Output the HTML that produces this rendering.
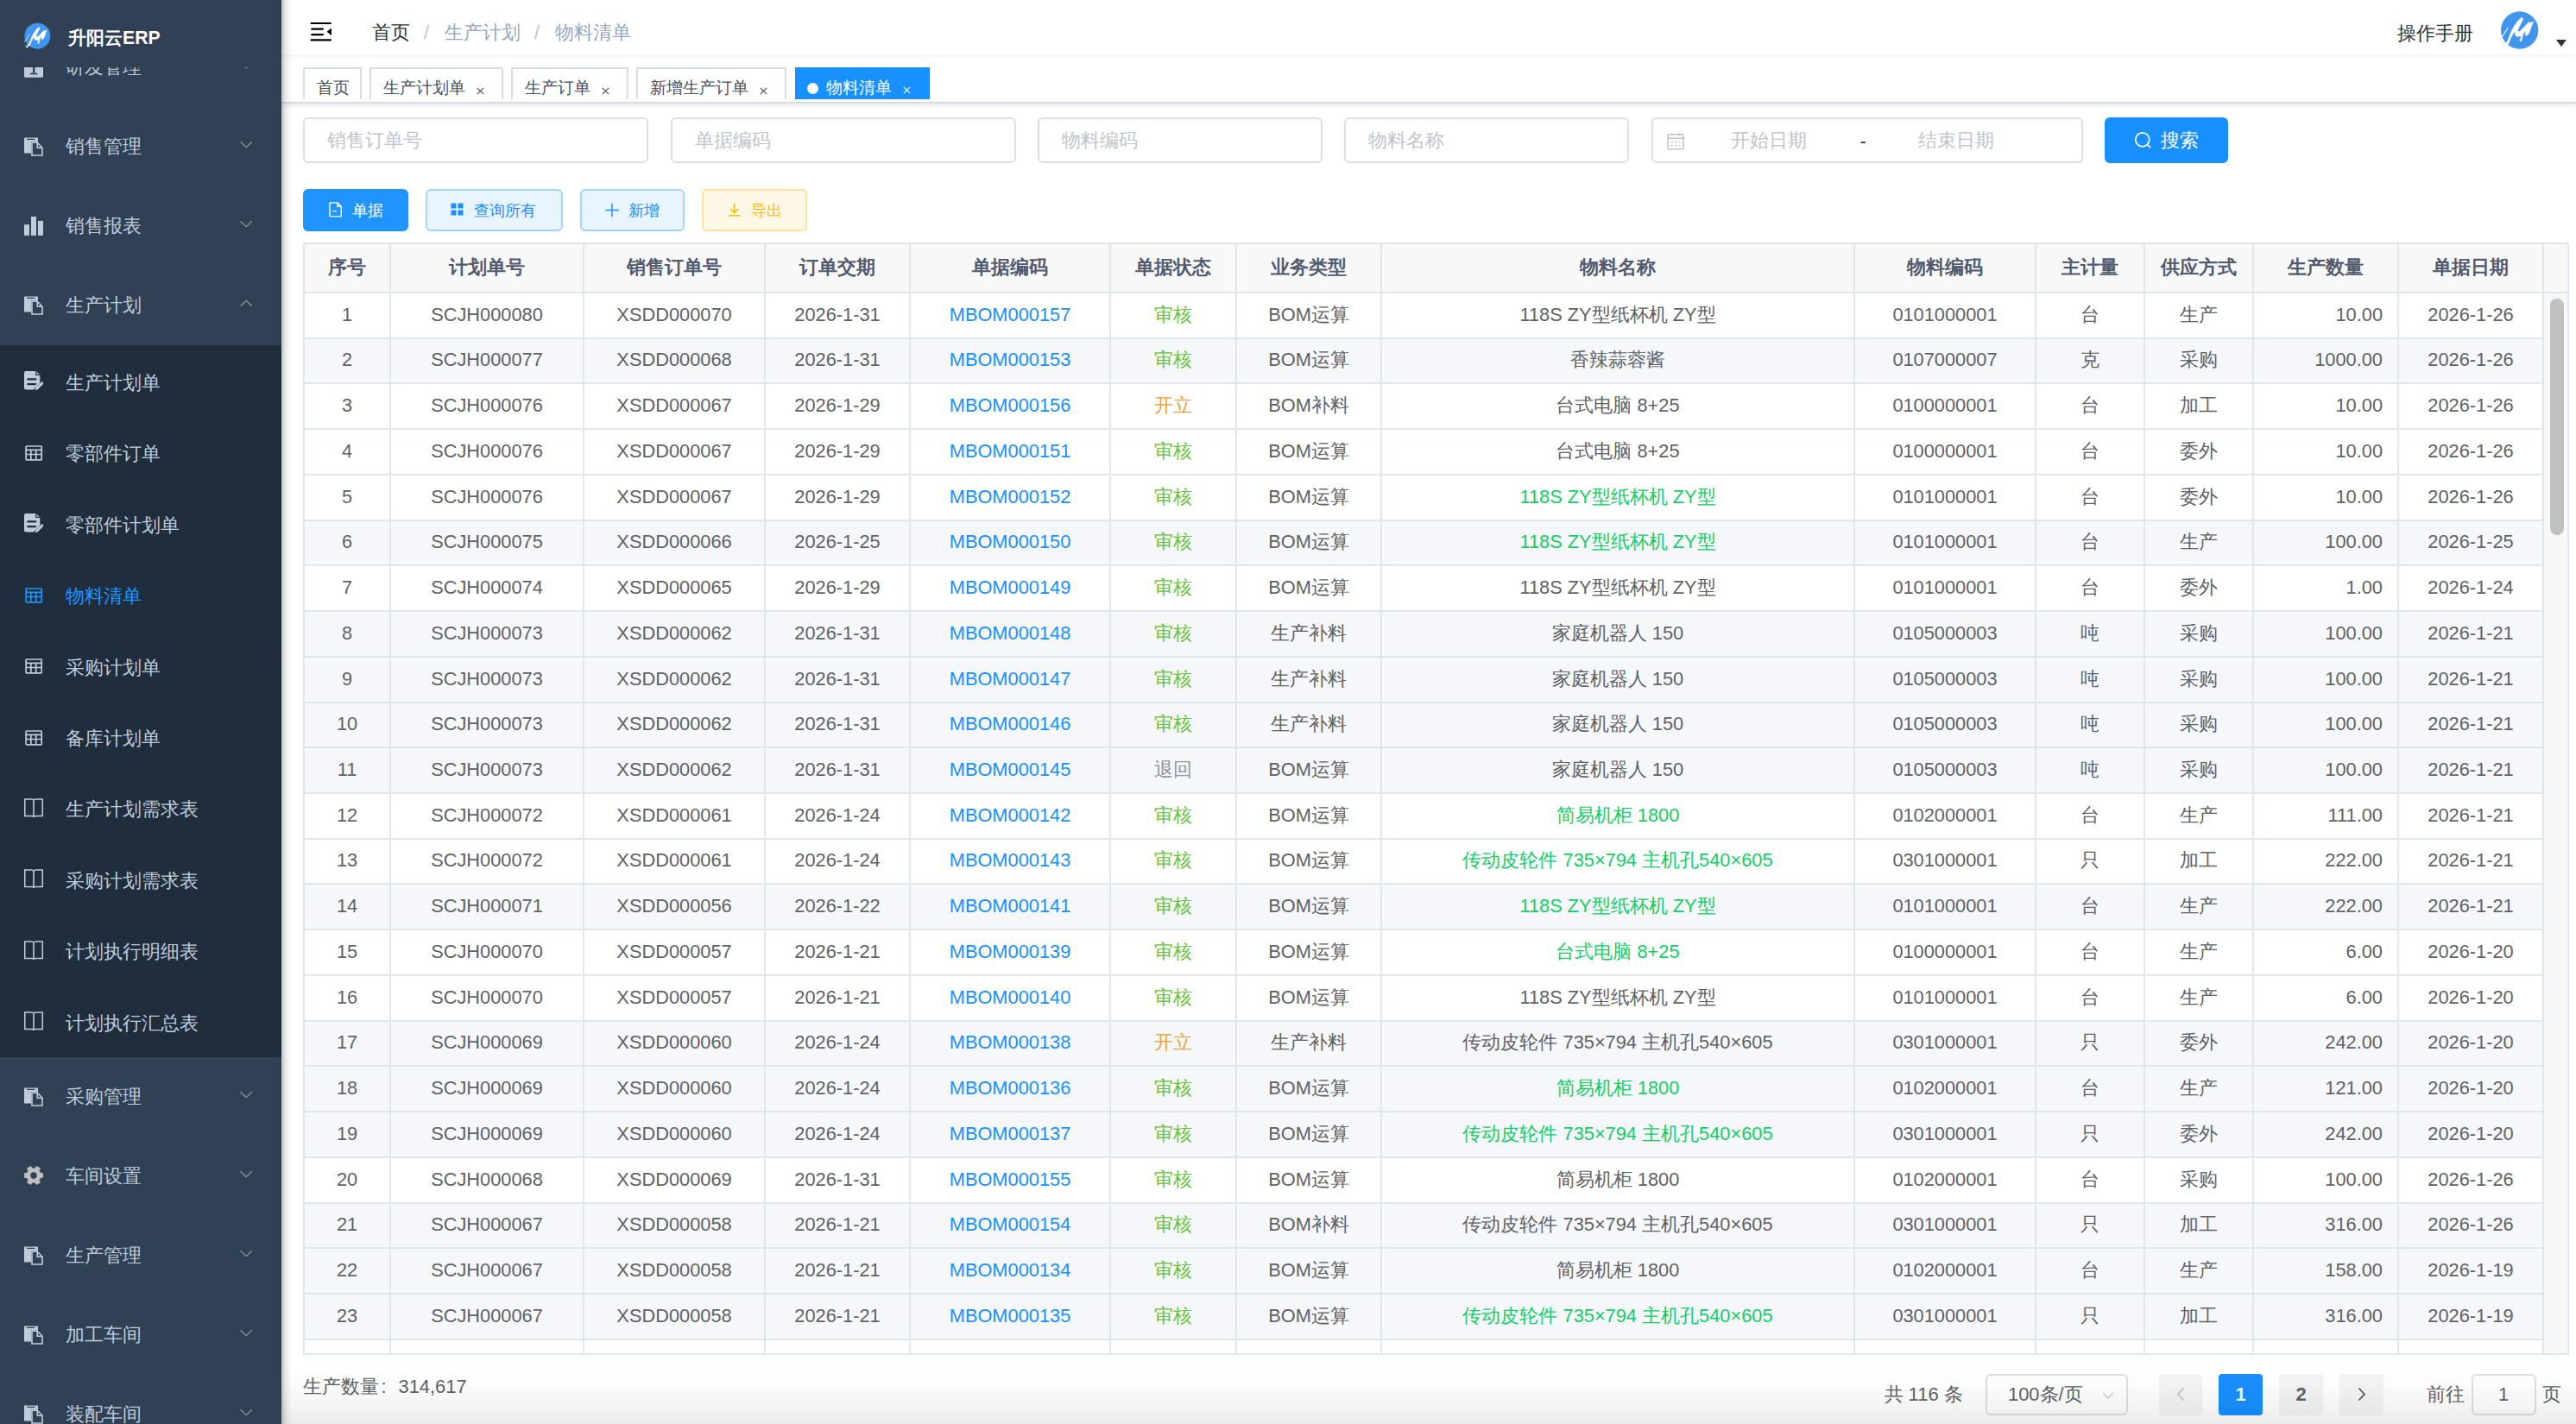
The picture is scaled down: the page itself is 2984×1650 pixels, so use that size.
<!DOCTYPE html>
<html><head><meta charset="utf-8"><title>物料清单</title>
<style>
*{box-sizing:border-box;margin:0;padding:0}
html,body{width:2984px;height:1650px;overflow:hidden;background:#fff;font-family:"Liberation Sans",sans-serif;}
.abs{position:absolute}
#sidebar{position:absolute;left:0;top:0;width:326px;height:1650px;background:#304156;overflow:hidden;z-index:3}
.micon{position:absolute;left:28px;width:22px;height:24px}
.micon svg{display:block}
.mtext{position:absolute;left:76px;height:40px;line-height:40px;font-size:21.9px;color:#bfcbd9;white-space:nowrap}
.mtext.active{color:#1e96ff}
.marrow{position:absolute;left:277px}
#logo{position:absolute;left:0;top:0;width:326px;height:77.5px;background:#304156;z-index:2}
#main-shadow{position:absolute;left:326px;top:0;width:20px;height:1650px;background:linear-gradient(to right,rgba(0,21,41,.28),rgba(0,21,41,.10) 4px,rgba(0,21,41,0) 12px);z-index:2}
.hl{position:absolute;left:351px;width:2625px;height:2px;background:#dfe6ec}
.vl{position:absolute;top:281px;width:2px;height:1289px;background:#dfe6ec}
.rowbg{position:absolute;left:353px;width:2592px}
.th{position:absolute;top:282px;height:55px;line-height:55px;text-align:center;font-size:21.6px;font-weight:bold;color:#515a6e;white-space:nowrap}
.td{position:absolute;text-align:center;font-size:21.8px;color:#606266;white-space:nowrap}
.td.num{text-align:right;padding-right:17px}
.link{color:#1890ff}
.st-ok{color:#67c23a} .st-open{color:#e6a23c} .st-back{color:#909399}
.green{color:#13ce66}
.inp{position:absolute;top:136px;height:53px;border:2px solid #dcdfe6;border-radius:6px;background:#fff}
.ph{position:absolute;top:0;height:49px;line-height:49px;font-size:21.9px;color:#c0c4cc;white-space:nowrap}
.btn{position:absolute;top:219px;height:49px;border-radius:6px;font-size:18.3px;white-space:nowrap}
.btn .t{position:absolute;top:0;line-height:49px;height:49px}
.tab{position:absolute;top:78px;height:37px;border:2px solid #d8dce5;border-bottom:none;background:#fff;font-size:18.5px;color:#495060;white-space:nowrap;overflow:hidden}
.tab .t{position:absolute;top:7px;line-height:30px}
.tab .x{position:absolute;top:20.5px;width:9px;height:9px}
.pg{position:absolute;top:1591.5px;height:48.5px;width:51px;border-radius:4px;background:#f4f4f5;}
</style></head><body>
<div id="sidebar">
<div class="micon" style="top:67.00px"><svg width="22" height="24" viewBox="0 0 22 24"><path d="M0 8h22v13.4q0 1.3-1.3 1.3H1.3Q0 22.7 0 21.4z" fill="#bfcbd9"/><rect x="10" y="8" width="2.4" height="9.6" fill="#304156"/><rect x="7" y="17.6" width="8.4" height="1.7" fill="#304156"/></svg></div><div class="mtext" style="top:58.20px">研发管理</div><svg class="marrow" style="top:71.00px" width="16" height="9" viewBox="0 0 16 9"><path d="M1.6 1.2l6.6 6.4 6.6-6.4" fill="none" stroke="#909399" stroke-width="1.3"/></svg>
<div class="micon" style="top:159.00px"><svg width="22" height="22" viewBox="0 0 22 22"><path d="M0 .5h16v5H8v13H0z" fill="#bfcbd9"/><rect x="3" y="1.7" width="9.6" height="1.3" rx=".6" fill="#304156"/><path d="M9 6.3h6.3l5.7 5.9V21H9z" fill="none" stroke="#bfcbd9" stroke-width="1.6"/><path d="M15.3 6.3v5.9h5.7" fill="none" stroke="#bfcbd9" stroke-width="1.6"/></svg></div><div class="mtext" style="top:150.20px">销售管理</div><svg class="marrow" style="top:163.00px" width="16" height="9" viewBox="0 0 16 9"><path d="M1.6 1.2l6.6 6.4 6.6-6.4" fill="none" stroke="#909399" stroke-width="1.3"/></svg>
<div class="micon" style="top:251.00px"><svg width="22" height="22" viewBox="0 0 22 22"><rect x="0" y="9.2" width="6" height="12.7" fill="#bfcbd9"/><rect x="8" y="0" width="6" height="21.9" fill="#bfcbd9"/><rect x="16" y="4.9" width="6" height="17" fill="#bfcbd9"/></svg></div><div class="mtext" style="top:242.20px">销售报表</div><svg class="marrow" style="top:255.00px" width="16" height="9" viewBox="0 0 16 9"><path d="M1.6 1.2l6.6 6.4 6.6-6.4" fill="none" stroke="#909399" stroke-width="1.3"/></svg>
<div class="micon" style="top:343.00px"><svg width="22" height="22" viewBox="0 0 22 22"><path d="M0 .5h16v5H8v13H0z" fill="#bfcbd9"/><rect x="3" y="1.7" width="9.6" height="1.3" rx=".6" fill="#304156"/><path d="M9 6.3h6.3l5.7 5.9V21H9z" fill="none" stroke="#bfcbd9" stroke-width="1.6"/><path d="M15.3 6.3v5.9h5.7" fill="none" stroke="#bfcbd9" stroke-width="1.6"/></svg></div><div class="mtext" style="top:334.20px">生产计划</div><svg class="marrow" style="top:347.00px" width="16" height="9" viewBox="0 0 16 9"><path d="M1.6 7.8l6.6-6.4 6.6 6.4" fill="none" stroke="#909399" stroke-width="1.3"/></svg>
<div style="position:absolute;left:0;top:400.00px;width:326px;height:824.60px;background:#1f2d3d"></div>
<div class="micon" style="top:428.83px"><svg width="22" height="24" viewBox="0 0 22 24"><path d="M2 1h11.8l4.5 4.4V15l-7.4 7.4H2q-2 0-2-2V3q0-2 2-2z" fill="#bfcbd9"/><path d="M13.8 1v4.4h4.5" fill="none" stroke="#1f2d3d" stroke-width="1.2"/><rect x="3.2" y="9.3" width="11.3" height="2.2" rx="1.1" fill="#1f2d3d"/><rect x="3.2" y="15" width="11" height="2.2" rx="1.1" fill="#1f2d3d"/><path d="M12.6 23.3l1-3.2 7.2-7.2 2.2 2.2-7.2 7.2z" fill="#bfcbd9"/></svg></div>
<div class="mtext" style="top:423.73px">生产计划单</div>
<div class="micon" style="top:516.04px"><svg width="22" height="22" viewBox="0 0 22 22"><rect x="2.1" y="1" width="18.1" height="15.8" rx=".7" fill="none" stroke="#bfcbd9" stroke-width="1.7"/><path d="M2.1 5.3h18.1M2.1 10.5h18.1M7.8 5.3v11.5M13.7 5.3v11.5" stroke="#bfcbd9" stroke-width="1.7"/></svg></div>
<div class="mtext" style="top:506.19px">零部件订单</div>
<div class="micon" style="top:593.75px"><svg width="22" height="24" viewBox="0 0 22 24"><path d="M2 1h11.8l4.5 4.4V15l-7.4 7.4H2q-2 0-2-2V3q0-2 2-2z" fill="#bfcbd9"/><path d="M13.8 1v4.4h4.5" fill="none" stroke="#1f2d3d" stroke-width="1.2"/><rect x="3.2" y="9.3" width="11.3" height="2.2" rx="1.1" fill="#1f2d3d"/><rect x="3.2" y="15" width="11" height="2.2" rx="1.1" fill="#1f2d3d"/><path d="M12.6 23.3l1-3.2 7.2-7.2 2.2 2.2-7.2 7.2z" fill="#bfcbd9"/></svg></div>
<div class="mtext" style="top:588.65px">零部件计划单</div>
<div class="micon" style="top:680.96px"><svg width="22" height="22" viewBox="0 0 22 22"><rect x="2.1" y="1" width="18.1" height="15.8" rx=".7" fill="none" stroke="#1e96ff" stroke-width="1.7"/><path d="M2.1 5.3h18.1M2.1 10.5h18.1M7.8 5.3v11.5M13.7 5.3v11.5" stroke="#1e96ff" stroke-width="1.7"/></svg></div>
<div class="mtext active" style="top:671.11px">物料清单</div>
<div class="micon" style="top:763.42px"><svg width="22" height="22" viewBox="0 0 22 22"><rect x="2.1" y="1" width="18.1" height="15.8" rx=".7" fill="none" stroke="#bfcbd9" stroke-width="1.7"/><path d="M2.1 5.3h18.1M2.1 10.5h18.1M7.8 5.3v11.5M13.7 5.3v11.5" stroke="#bfcbd9" stroke-width="1.7"/></svg></div>
<div class="mtext" style="top:753.57px">采购计划单</div>
<div class="micon" style="top:845.88px"><svg width="22" height="22" viewBox="0 0 22 22"><rect x="2.1" y="1" width="18.1" height="15.8" rx=".7" fill="none" stroke="#bfcbd9" stroke-width="1.7"/><path d="M2.1 5.3h18.1M2.1 10.5h18.1M7.8 5.3v11.5M13.7 5.3v11.5" stroke="#bfcbd9" stroke-width="1.7"/></svg></div>
<div class="mtext" style="top:836.03px">备库计划单</div>
<div class="micon" style="top:924.99px"><svg width="22" height="22" viewBox="0 0 22 22"><path d="M.75.9h7.8c1.3 0 2 .5 2.45 1.5.45-1 1.15-1.5 2.45-1.5h7.8v19.5h-7.8c-1.3 0-2 .3-2.45 1.1-.45-.8-1.15-1.1-2.45-1.1H.75z" fill="none" stroke="#bfcbd9" stroke-width="1.5"/><path d="M11 2.4v18.4" stroke="#a9b4c2" stroke-width="1.9"/></svg></div>
<div class="mtext" style="top:918.49px">生产计划需求表</div>
<div class="micon" style="top:1007.45px"><svg width="22" height="22" viewBox="0 0 22 22"><path d="M.75.9h7.8c1.3 0 2 .5 2.45 1.5.45-1 1.15-1.5 2.45-1.5h7.8v19.5h-7.8c-1.3 0-2 .3-2.45 1.1-.45-.8-1.15-1.1-2.45-1.1H.75z" fill="none" stroke="#bfcbd9" stroke-width="1.5"/><path d="M11 2.4v18.4" stroke="#a9b4c2" stroke-width="1.9"/></svg></div>
<div class="mtext" style="top:1000.95px">采购计划需求表</div>
<div class="micon" style="top:1089.91px"><svg width="22" height="22" viewBox="0 0 22 22"><path d="M.75.9h7.8c1.3 0 2 .5 2.45 1.5.45-1 1.15-1.5 2.45-1.5h7.8v19.5h-7.8c-1.3 0-2 .3-2.45 1.1-.45-.8-1.15-1.1-2.45-1.1H.75z" fill="none" stroke="#bfcbd9" stroke-width="1.5"/><path d="M11 2.4v18.4" stroke="#a9b4c2" stroke-width="1.9"/></svg></div>
<div class="mtext" style="top:1083.41px">计划执行明细表</div>
<div class="micon" style="top:1172.37px"><svg width="22" height="22" viewBox="0 0 22 22"><path d="M.75.9h7.8c1.3 0 2 .5 2.45 1.5.45-1 1.15-1.5 2.45-1.5h7.8v19.5h-7.8c-1.3 0-2 .3-2.45 1.1-.45-.8-1.15-1.1-2.45-1.1H.75z" fill="none" stroke="#bfcbd9" stroke-width="1.5"/><path d="M11 2.4v18.4" stroke="#a9b4c2" stroke-width="1.9"/></svg></div>
<div class="mtext" style="top:1165.87px">计划执行汇总表</div>
<div class="micon" style="top:1259.60px"><svg width="22" height="22" viewBox="0 0 22 22"><path d="M0 .5h16v5H8v13H0z" fill="#bfcbd9"/><rect x="3" y="1.7" width="9.6" height="1.3" rx=".6" fill="#304156"/><path d="M9 6.3h6.3l5.7 5.9V21H9z" fill="none" stroke="#bfcbd9" stroke-width="1.6"/><path d="M15.3 6.3v5.9h5.7" fill="none" stroke="#bfcbd9" stroke-width="1.6"/></svg></div><div class="mtext" style="top:1250.80px">采购管理</div><svg class="marrow" style="top:1263.60px" width="16" height="9" viewBox="0 0 16 9"><path d="M1.6 1.2l6.6 6.4 6.6-6.4" fill="none" stroke="#909399" stroke-width="1.3"/></svg>
<div class="micon" style="top:1351.00px"><svg width="22" height="22" viewBox="0 0 22 22"><path fill="#c0c0c0" fill-rule="evenodd" stroke="#c0c0c0" stroke-width=".8" stroke-linejoin="round" d="M18.75 8.33 L21.86 8.69 L21.86 13.31 L18.75 13.67 L17.19 16.38 L18.43 19.25 L14.43 21.56 L12.56 19.05 L9.44 19.05 L7.57 21.56 L3.57 19.25 L4.81 16.38 L3.25 13.67 L0.14 13.31 L0.14 8.69 L3.25 8.33 L4.81 5.62 L3.57 2.75 L7.57 0.44 L9.44 2.95 L12.56 2.95 L14.43 0.44 L18.43 2.75 L17.19 5.62Z M11 6.8a4.2 4.2 0 1 0 0 8.4a4.2 4.2 0 1 0 0-8.4z"/></svg></div><div class="mtext" style="top:1342.80px">车间设置</div><svg class="marrow" style="top:1355.60px" width="16" height="9" viewBox="0 0 16 9"><path d="M1.6 1.2l6.6 6.4 6.6-6.4" fill="none" stroke="#909399" stroke-width="1.3"/></svg>
<div class="micon" style="top:1443.60px"><svg width="22" height="22" viewBox="0 0 22 22"><path d="M0 .5h16v5H8v13H0z" fill="#bfcbd9"/><rect x="3" y="1.7" width="9.6" height="1.3" rx=".6" fill="#304156"/><path d="M9 6.3h6.3l5.7 5.9V21H9z" fill="none" stroke="#bfcbd9" stroke-width="1.6"/><path d="M15.3 6.3v5.9h5.7" fill="none" stroke="#bfcbd9" stroke-width="1.6"/></svg></div><div class="mtext" style="top:1434.80px">生产管理</div><svg class="marrow" style="top:1447.60px" width="16" height="9" viewBox="0 0 16 9"><path d="M1.6 1.2l6.6 6.4 6.6-6.4" fill="none" stroke="#909399" stroke-width="1.3"/></svg>
<div class="micon" style="top:1535.60px"><svg width="22" height="22" viewBox="0 0 22 22"><path d="M0 .5h16v5H8v13H0z" fill="#bfcbd9"/><rect x="3" y="1.7" width="9.6" height="1.3" rx=".6" fill="#304156"/><path d="M9 6.3h6.3l5.7 5.9V21H9z" fill="none" stroke="#bfcbd9" stroke-width="1.6"/><path d="M15.3 6.3v5.9h5.7" fill="none" stroke="#bfcbd9" stroke-width="1.6"/></svg></div><div class="mtext" style="top:1526.80px">加工车间</div><svg class="marrow" style="top:1539.60px" width="16" height="9" viewBox="0 0 16 9"><path d="M1.6 1.2l6.6 6.4 6.6-6.4" fill="none" stroke="#909399" stroke-width="1.3"/></svg>
<div class="micon" style="top:1627.60px"><svg width="22" height="22" viewBox="0 0 22 22"><path d="M0 .5h16v5H8v13H0z" fill="#bfcbd9"/><rect x="3" y="1.7" width="9.6" height="1.3" rx=".6" fill="#304156"/><path d="M9 6.3h6.3l5.7 5.9V21H9z" fill="none" stroke="#bfcbd9" stroke-width="1.6"/><path d="M15.3 6.3v5.9h5.7" fill="none" stroke="#bfcbd9" stroke-width="1.6"/></svg></div><div class="mtext" style="top:1618.80px">装配车间</div><svg class="marrow" style="top:1631.60px" width="16" height="9" viewBox="0 0 16 9"><path d="M1.6 1.2l6.6 6.4 6.6-6.4" fill="none" stroke="#909399" stroke-width="1.3"/></svg>
<div id="logo">
 <div class="abs" style="left:25.4px;top:23.3px;width:38.7px;height:38.7px"><svg viewBox="0 0 56 56" width="38.7" height="38.7"><circle cx="26.65" cy="27" r="21.7" fill="#4096ee"/><path fill="#fff" stroke="#fff" stroke-width=".6" stroke-linejoin="round" d="M7.1 46.8 L13 39 L16.5 30 L20.4 22 L25.2 15.7 L28.7 12.5 L30.6 13.2 L30.3 15 L27.5 20.4 L24.4 26.7 L24.6 28.3 L26.5 28.6 L33.4 22 L37.4 17.3 L38.3 18.7 L39.8 18.2 L42.5 16.9 L37.7 29.9 L35.5 33 L34 33.4 L32.8 27.2 L30 34.3 L28.7 39.7 L27.3 39.8 L27.2 37.5 L29.2 34 L23 34.2 L21.3 32 L21.4 27.2 L16.6 35.6 L14 42.6 L9.8 45.5Z"/><path d="M4.6 37.6L13.4 23.8" stroke="#fff" stroke-width="1.3" opacity=".75"/><path d="M6 44.5l3.5-4.5M7.5 47.5l4-3.5" stroke="#cfe3fb" stroke-width="1" opacity=".8"/></svg></div>
 <div class="abs" style="left:79px;top:24px;height:40px;line-height:40px;font-size:21.2px;font-weight:bold;color:#fff;white-space:nowrap">升阳云ERP</div>
</div>
</div>
<div id="main-shadow"></div>

<!-- header -->
<div class="abs" style="left:326px;top:0;width:2658px;height:62.5px;background:#fff;box-shadow:0 1px 7px rgba(0,21,41,.07);z-index:1"></div>
<svg class="abs" style="left:358px;top:24px;z-index:1" width="28" height="26" viewBox="0 0 28 26"><rect x="1.5" y="1.9" width="24.6" height="2.2" rx="1.1" fill="#000"/><rect x="2.1" y="8.4" width="15" height="2.3" rx="1.1" fill="#000"/><rect x="2.1" y="15" width="15" height="2.2" rx="1.1" fill="#000"/><rect x="1.5" y="21.3" width="24.6" height="2.3" rx="1.1" fill="#000"/><path d="M26 8.5V16.9L20.6 12.7Z" fill="#000"/></svg>
<div class="abs" style="left:430.5px;top:18px;line-height:40px;font-size:21.9px;color:#303133;z-index:1;white-space:nowrap">首页</div>
<div class="abs" style="left:491px;top:18px;line-height:40px;font-size:21.9px;color:#c0c4cc;z-index:1">/</div>
<div class="abs" style="left:514.5px;top:18px;line-height:40px;font-size:21.9px;color:#97a8be;z-index:1;white-space:nowrap">生产计划</div>
<div class="abs" style="left:619px;top:18px;line-height:40px;font-size:21.9px;color:#c0c4cc;z-index:1">/</div>
<div class="abs" style="left:643px;top:18px;line-height:40px;font-size:21.9px;color:#97a8be;z-index:1;white-space:nowrap">物料清单</div>
<div class="abs" style="left:2776.5px;top:19px;line-height:40px;font-size:21.9px;color:#303133;z-index:1;white-space:nowrap">操作手册</div>
<div class="abs" style="left:2892px;top:8px;width:56px;height:56px;z-index:1"><svg viewBox="0 0 56 56" width="56" height="56"><circle cx="26.65" cy="27" r="21.7" fill="#4195ec"/><path fill="#fff" stroke="#fff" stroke-width=".6" stroke-linejoin="round" d="M7.1 46.8 L13 39 L16.5 30 L20.4 22 L25.2 15.7 L28.7 12.5 L30.6 13.2 L30.3 15 L27.5 20.4 L24.4 26.7 L24.6 28.3 L26.5 28.6 L33.4 22 L37.4 17.3 L38.3 18.7 L39.8 18.2 L42.5 16.9 L37.7 29.9 L35.5 33 L34 33.4 L32.8 27.2 L30 34.3 L28.7 39.7 L27.3 39.8 L27.2 37.5 L29.2 34 L23 34.2 L21.3 32 L21.4 27.2 L16.6 35.6 L14 42.6 L9.8 45.5Z"/><path d="M4.6 37.6L13.4 23.8" stroke="#fff" stroke-width="1.3" opacity=".75"/><path d="M6 44.5l3.5-4.5M7.5 47.5l4-3.5" stroke="#cfe3fb" stroke-width="1" opacity=".8"/></svg></div>
<svg class="abs" style="left:2960px;top:45px;z-index:1" width="14" height="10" viewBox="0 0 14 10"><path d="M1 1h12l-6 8z" fill="#303133"/></svg>

<!-- tags view -->
<div class="abs" style="left:326px;top:62.5px;width:2658px;height:57.5px;background:#fff;border-bottom:2px solid #d8dce5;box-shadow:0 2px 6px rgba(0,0,0,.10)"></div>
<div class="tab" style="left:351px;width:68px"><span class="t" style="left:14px">首页</span></div>
<div class="tab" style="left:428px;width:155px"><span class="t" style="left:14px">生产计划单</span><span class="x" style="left:122px"><svg width="9" height="9" viewBox="0 0 9 9" style="display:block"><path d="M.8.8l7.4 7.4M8.2.8L.8 8.2" stroke="currentColor" stroke-width="1.2"/></svg></span></div>
<div class="tab" style="left:592px;width:136px"><span class="t" style="left:14px">生产订单</span><span class="x" style="left:103px"><svg width="9" height="9" viewBox="0 0 9 9" style="display:block"><path d="M.8.8l7.4 7.4M8.2.8L.8 8.2" stroke="currentColor" stroke-width="1.2"/></svg></span></div>
<div class="tab" style="left:737px;width:174px"><span class="t" style="left:14px">新增生产订单</span><span class="x" style="left:141px"><svg width="9" height="9" viewBox="0 0 9 9" style="display:block"><path d="M.8.8l7.4 7.4M8.2.8L.8 8.2" stroke="currentColor" stroke-width="1.2"/></svg></span></div>
<div class="tab" style="left:921px;width:156px;background:#1890ff;border-color:#1890ff;color:#fff"><span class="abs" style="left:11.5px;top:15.5px;width:13.2px;height:13.2px;border-radius:50%;background:#fff"></span><span class="t" style="left:34px">物料清单</span><span class="x" style="left:122.5px;top:19.5px"><svg width="9" height="9" viewBox="0 0 9 9" style="display:block"><path d="M.8.8l7.4 7.4M8.2.8L.8 8.2" stroke="currentColor" stroke-width="1.2"/></svg></span></div>

<!-- search inputs -->
<div class="inp" style="left:351px;width:400px"><span class="ph" style="left:26px">销售订单号</span></div>
<div class="inp" style="left:777px;width:400px"><span class="ph" style="left:26px">单据编码</span></div>
<div class="inp" style="left:1202px;width:330px"><span class="ph" style="left:26px">物料编码</span></div>
<div class="inp" style="left:1557px;width:330px"><span class="ph" style="left:26px">物料名称</span></div>
<div class="inp" style="left:1913px;width:500px">
 <svg class="abs" style="left:14.7px;top:15px" width="22" height="22" viewBox="0 0 22 22"><rect x="2" y="2.8" width="18" height="17" rx="1" fill="none" stroke="#c0c4cc" stroke-width="1.5"/><path d="M2 7.3h18M6.5 1v3.5M15.5 1v3.5" stroke="#c0c4cc" stroke-width="1.5"/><path d="M5.5 11.6h2.2M9.9 11.6h2.2M14.3 11.6h2.2M5.5 15.6h2.2M9.9 15.6h2.2M14.3 15.6h2.2" stroke="#c0c4cc" stroke-width="1.3"/></svg>
 <span class="ph" style="left:90px">开始日期</span>
 <span class="ph" style="left:239.5px;top:1px;color:#303133">-</span>
 <span class="ph" style="left:307px">结束日期</span>
</div>
<div class="btn" style="left:2438px;top:136px;width:143px;height:53px;background:#1890ff;color:#fff;font-size:21.9px">
 <svg class="abs" style="left:33.5px;top:16px" width="22" height="22" viewBox="0 0 22 22"><circle cx="9.8" cy="9.8" r="8" fill="none" stroke="#fff" stroke-width="1.7"/><path d="M15.5 15.5l3.6 3.6" stroke="#fff" stroke-width="1.7"/></svg>
 <span class="t" style="left:65px;line-height:53px;height:53px">搜索</span>
</div>

<!-- action buttons -->
<div class="btn" style="left:351px;width:122px;background:#2094fe;color:#fff">
 <svg class="abs" style="left:29.6px;top:15.2px" width="16" height="18" viewBox="0 0 16 18"><path d="M1 .9h9l4.3 4.3V16.6H1z M10 .9v4.3h4.3" fill="none" stroke="#fff" stroke-width="1.4"/><path d="M4.3 10.6h4.6" stroke="#fff" stroke-width="1.4"/></svg>
 <span class="t" style="left:57px">单据</span>
</div>
<div class="btn" style="left:493px;width:159px;background:#e8f4ff;border:2px solid #a3d3ff;color:#1890ff">
 <svg class="abs" style="left:27px;top:14px" width="16" height="16" viewBox="0 0 16 16"><rect x="0.5" y="0.5" width="6" height="6" fill="#1890ff"/><rect x="8.5" y="0.5" width="6" height="6" fill="#1890ff"/><rect x="0.5" y="8.5" width="6" height="6" fill="#1890ff"/><rect x="8.5" y="8.5" width="6" height="6" fill="#1890ff"/></svg>
 <span class="t" style="left:53.5px;line-height:45px">查询所有</span>
</div>
<div class="btn" style="left:672px;width:121px;background:#e8f4ff;border:2px solid #a3d3ff;color:#1890ff">
 <svg class="abs" style="left:27px;top:13.5px" width="17" height="17" viewBox="0 0 17 17"><path d="M8 .8v15.4M.6 8.4h15.4" stroke="#1890ff" stroke-width="1.5"/></svg>
 <span class="t" style="left:54px;line-height:45px">新增</span>
</div>
<div class="btn" style="left:813px;width:122px;background:#fff8e6;border:2px solid #ffe399;color:#ffba00">
 <svg class="abs" style="left:28px;top:13.5px" width="16" height="17" viewBox="0 0 16 17"><path d="M7.6 1v10.5M3 7l4.6 4.6L12.2 7M.9 14.7h13.6" fill="none" stroke="#ffba00" stroke-width="1.4"/></svg>
 <span class="t" style="left:54.5px;line-height:45px">导出</span>
</div>

<!-- table -->
<div class="rowbg" style="top:340px;height:51px;background:#ffffff"></div>
<div class="rowbg" style="top:393px;height:50px;background:#f5f7fa"></div>
<div class="rowbg" style="top:445px;height:51px;background:#ffffff"></div>
<div class="rowbg" style="top:498px;height:51px;background:#ffffff"></div>
<div class="rowbg" style="top:551px;height:51px;background:#ffffff"></div>
<div class="rowbg" style="top:604px;height:50px;background:#f5f7fa"></div>
<div class="rowbg" style="top:656px;height:51px;background:#ffffff"></div>
<div class="rowbg" style="top:709px;height:51px;background:#f5f7fa"></div>
<div class="rowbg" style="top:762px;height:51px;background:#f5f7fa"></div>
<div class="rowbg" style="top:815px;height:50px;background:#f5f7fa"></div>
<div class="rowbg" style="top:867px;height:51px;background:#f5f7fa"></div>
<div class="rowbg" style="top:920px;height:51px;background:#ffffff"></div>
<div class="rowbg" style="top:973px;height:50px;background:#ffffff"></div>
<div class="rowbg" style="top:1025px;height:51px;background:#f5f7fa"></div>
<div class="rowbg" style="top:1078px;height:51px;background:#ffffff"></div>
<div class="rowbg" style="top:1131px;height:51px;background:#ffffff"></div>
<div class="rowbg" style="top:1184px;height:50px;background:#f5f7fa"></div>
<div class="rowbg" style="top:1236px;height:51px;background:#f5f7fa"></div>
<div class="rowbg" style="top:1289px;height:51px;background:#f5f7fa"></div>
<div class="rowbg" style="top:1342px;height:51px;background:#ffffff"></div>
<div class="rowbg" style="top:1395px;height:50px;background:#f5f7fa"></div>
<div class="rowbg" style="top:1447px;height:51px;background:#f5f7fa"></div>
<div class="rowbg" style="top:1500px;height:51px;background:#f5f7fa"></div>
<div class="rowbg" style="top:283px;height:55px;background:#f8f8f9"></div>
<div style="position:absolute;left:2947px;top:283px;width:27px;height:1285px;background:#f8f8f9"></div>
<div class="hl" style="top:281px"></div>
<div class="hl" style="top:338px"></div>
<div class="hl" style="top:391px;width:2594px"></div>
<div class="hl" style="top:443px;width:2594px"></div>
<div class="hl" style="top:496px;width:2594px"></div>
<div class="hl" style="top:549px;width:2594px"></div>
<div class="hl" style="top:602px;width:2594px"></div>
<div class="hl" style="top:654px;width:2594px"></div>
<div class="hl" style="top:707px;width:2594px"></div>
<div class="hl" style="top:760px;width:2594px"></div>
<div class="hl" style="top:813px;width:2594px"></div>
<div class="hl" style="top:865px;width:2594px"></div>
<div class="hl" style="top:918px;width:2594px"></div>
<div class="hl" style="top:971px;width:2594px"></div>
<div class="hl" style="top:1023px;width:2594px"></div>
<div class="hl" style="top:1076px;width:2594px"></div>
<div class="hl" style="top:1129px;width:2594px"></div>
<div class="hl" style="top:1182px;width:2594px"></div>
<div class="hl" style="top:1234px;width:2594px"></div>
<div class="hl" style="top:1287px;width:2594px"></div>
<div class="hl" style="top:1340px;width:2594px"></div>
<div class="hl" style="top:1393px;width:2594px"></div>
<div class="hl" style="top:1445px;width:2594px"></div>
<div class="hl" style="top:1498px;width:2594px"></div>
<div class="hl" style="top:1551px;width:2594px"></div>
<div class="hl" style="top:1568px"></div>
<div class="vl" style="left:351px"></div>
<div class="vl" style="left:451px"></div>
<div class="vl" style="left:675px"></div>
<div class="vl" style="left:885px"></div>
<div class="vl" style="left:1053px"></div>
<div class="vl" style="left:1285px"></div>
<div class="vl" style="left:1431px"></div>
<div class="vl" style="left:1599px"></div>
<div class="vl" style="left:2147px"></div>
<div class="vl" style="left:2357px"></div>
<div class="vl" style="left:2483px"></div>
<div class="vl" style="left:2609px"></div>
<div class="vl" style="left:2777px"></div>
<div class="vl" style="left:2945px"></div>
<div class="vl" style="left:2974px;background:#e4e8f3"></div>
<div class="th" style="left:353px;width:98px">序号</div>
<div class="th" style="left:453px;width:222px">计划单号</div>
<div class="th" style="left:677px;width:208px">销售订单号</div>
<div class="th" style="left:887px;width:166px">订单交期</div>
<div class="th" style="left:1055px;width:230px">单据编码</div>
<div class="th" style="left:1287px;width:144px">单据状态</div>
<div class="th" style="left:1433px;width:166px">业务类型</div>
<div class="th" style="left:1601px;width:546px">物料名称</div>
<div class="th" style="left:2149px;width:208px">物料编码</div>
<div class="th" style="left:2359px;width:124px">主计量</div>
<div class="th" style="left:2485px;width:124px">供应方式</div>
<div class="th" style="left:2611px;width:166px">生产数量</div>
<div class="th" style="left:2779px;width:166px">单据日期</div>
<div class="td" style="left:353px;width:98px;top:339px;height:51px;line-height:51px">1</div>
<div class="td" style="left:453px;width:222px;top:339px;height:51px;line-height:51px">SCJH000080</div>
<div class="td" style="left:677px;width:208px;top:339px;height:51px;line-height:51px">XSDD000070</div>
<div class="td" style="left:887px;width:166px;top:339px;height:51px;line-height:51px">2026-1-31</div>
<div class="td link" style="left:1055px;width:230px;top:339px;height:51px;line-height:51px">MBOM000157</div>
<div class="td st-ok" style="left:1287px;width:144px;top:339px;height:51px;line-height:51px">审核</div>
<div class="td" style="left:1433px;width:166px;top:339px;height:51px;line-height:51px">BOM运算</div>
<div class="td" style="left:1601px;width:546px;top:339px;height:51px;line-height:51px">118S ZY型纸杯机 ZY型</div>
<div class="td" style="left:2149px;width:208px;top:339px;height:51px;line-height:51px">0101000001</div>
<div class="td" style="left:2359px;width:124px;top:339px;height:51px;line-height:51px">台</div>
<div class="td" style="left:2485px;width:124px;top:339px;height:51px;line-height:51px">生产</div>
<div class="td num" style="left:2611px;width:166px;top:339px;height:51px;line-height:51px">10.00</div>
<div class="td" style="left:2779px;width:166px;top:339px;height:51px;line-height:51px">2026-1-26</div>
<div class="td" style="left:353px;width:98px;top:392px;height:50px;line-height:50px">2</div>
<div class="td" style="left:453px;width:222px;top:392px;height:50px;line-height:50px">SCJH000077</div>
<div class="td" style="left:677px;width:208px;top:392px;height:50px;line-height:50px">XSDD000068</div>
<div class="td" style="left:887px;width:166px;top:392px;height:50px;line-height:50px">2026-1-31</div>
<div class="td link" style="left:1055px;width:230px;top:392px;height:50px;line-height:50px">MBOM000153</div>
<div class="td st-ok" style="left:1287px;width:144px;top:392px;height:50px;line-height:50px">审核</div>
<div class="td" style="left:1433px;width:166px;top:392px;height:50px;line-height:50px">BOM运算</div>
<div class="td" style="left:1601px;width:546px;top:392px;height:50px;line-height:50px">香辣蒜蓉酱</div>
<div class="td" style="left:2149px;width:208px;top:392px;height:50px;line-height:50px">0107000007</div>
<div class="td" style="left:2359px;width:124px;top:392px;height:50px;line-height:50px">克</div>
<div class="td" style="left:2485px;width:124px;top:392px;height:50px;line-height:50px">采购</div>
<div class="td num" style="left:2611px;width:166px;top:392px;height:50px;line-height:50px">1000.00</div>
<div class="td" style="left:2779px;width:166px;top:392px;height:50px;line-height:50px">2026-1-26</div>
<div class="td" style="left:353px;width:98px;top:444px;height:51px;line-height:51px">3</div>
<div class="td" style="left:453px;width:222px;top:444px;height:51px;line-height:51px">SCJH000076</div>
<div class="td" style="left:677px;width:208px;top:444px;height:51px;line-height:51px">XSDD000067</div>
<div class="td" style="left:887px;width:166px;top:444px;height:51px;line-height:51px">2026-1-29</div>
<div class="td link" style="left:1055px;width:230px;top:444px;height:51px;line-height:51px">MBOM000156</div>
<div class="td st-open" style="left:1287px;width:144px;top:444px;height:51px;line-height:51px">开立</div>
<div class="td" style="left:1433px;width:166px;top:444px;height:51px;line-height:51px">BOM补料</div>
<div class="td" style="left:1601px;width:546px;top:444px;height:51px;line-height:51px">台式电脑 8+25</div>
<div class="td" style="left:2149px;width:208px;top:444px;height:51px;line-height:51px">0100000001</div>
<div class="td" style="left:2359px;width:124px;top:444px;height:51px;line-height:51px">台</div>
<div class="td" style="left:2485px;width:124px;top:444px;height:51px;line-height:51px">加工</div>
<div class="td num" style="left:2611px;width:166px;top:444px;height:51px;line-height:51px">10.00</div>
<div class="td" style="left:2779px;width:166px;top:444px;height:51px;line-height:51px">2026-1-26</div>
<div class="td" style="left:353px;width:98px;top:497px;height:51px;line-height:51px">4</div>
<div class="td" style="left:453px;width:222px;top:497px;height:51px;line-height:51px">SCJH000076</div>
<div class="td" style="left:677px;width:208px;top:497px;height:51px;line-height:51px">XSDD000067</div>
<div class="td" style="left:887px;width:166px;top:497px;height:51px;line-height:51px">2026-1-29</div>
<div class="td link" style="left:1055px;width:230px;top:497px;height:51px;line-height:51px">MBOM000151</div>
<div class="td st-ok" style="left:1287px;width:144px;top:497px;height:51px;line-height:51px">审核</div>
<div class="td" style="left:1433px;width:166px;top:497px;height:51px;line-height:51px">BOM运算</div>
<div class="td" style="left:1601px;width:546px;top:497px;height:51px;line-height:51px">台式电脑 8+25</div>
<div class="td" style="left:2149px;width:208px;top:497px;height:51px;line-height:51px">0100000001</div>
<div class="td" style="left:2359px;width:124px;top:497px;height:51px;line-height:51px">台</div>
<div class="td" style="left:2485px;width:124px;top:497px;height:51px;line-height:51px">委外</div>
<div class="td num" style="left:2611px;width:166px;top:497px;height:51px;line-height:51px">10.00</div>
<div class="td" style="left:2779px;width:166px;top:497px;height:51px;line-height:51px">2026-1-26</div>
<div class="td" style="left:353px;width:98px;top:550px;height:51px;line-height:51px">5</div>
<div class="td" style="left:453px;width:222px;top:550px;height:51px;line-height:51px">SCJH000076</div>
<div class="td" style="left:677px;width:208px;top:550px;height:51px;line-height:51px">XSDD000067</div>
<div class="td" style="left:887px;width:166px;top:550px;height:51px;line-height:51px">2026-1-29</div>
<div class="td link" style="left:1055px;width:230px;top:550px;height:51px;line-height:51px">MBOM000152</div>
<div class="td st-ok" style="left:1287px;width:144px;top:550px;height:51px;line-height:51px">审核</div>
<div class="td" style="left:1433px;width:166px;top:550px;height:51px;line-height:51px">BOM运算</div>
<div class="td green" style="left:1601px;width:546px;top:550px;height:51px;line-height:51px">118S ZY型纸杯机 ZY型</div>
<div class="td" style="left:2149px;width:208px;top:550px;height:51px;line-height:51px">0101000001</div>
<div class="td" style="left:2359px;width:124px;top:550px;height:51px;line-height:51px">台</div>
<div class="td" style="left:2485px;width:124px;top:550px;height:51px;line-height:51px">委外</div>
<div class="td num" style="left:2611px;width:166px;top:550px;height:51px;line-height:51px">10.00</div>
<div class="td" style="left:2779px;width:166px;top:550px;height:51px;line-height:51px">2026-1-26</div>
<div class="td" style="left:353px;width:98px;top:603px;height:50px;line-height:50px">6</div>
<div class="td" style="left:453px;width:222px;top:603px;height:50px;line-height:50px">SCJH000075</div>
<div class="td" style="left:677px;width:208px;top:603px;height:50px;line-height:50px">XSDD000066</div>
<div class="td" style="left:887px;width:166px;top:603px;height:50px;line-height:50px">2026-1-25</div>
<div class="td link" style="left:1055px;width:230px;top:603px;height:50px;line-height:50px">MBOM000150</div>
<div class="td st-ok" style="left:1287px;width:144px;top:603px;height:50px;line-height:50px">审核</div>
<div class="td" style="left:1433px;width:166px;top:603px;height:50px;line-height:50px">BOM运算</div>
<div class="td green" style="left:1601px;width:546px;top:603px;height:50px;line-height:50px">118S ZY型纸杯机 ZY型</div>
<div class="td" style="left:2149px;width:208px;top:603px;height:50px;line-height:50px">0101000001</div>
<div class="td" style="left:2359px;width:124px;top:603px;height:50px;line-height:50px">台</div>
<div class="td" style="left:2485px;width:124px;top:603px;height:50px;line-height:50px">生产</div>
<div class="td num" style="left:2611px;width:166px;top:603px;height:50px;line-height:50px">100.00</div>
<div class="td" style="left:2779px;width:166px;top:603px;height:50px;line-height:50px">2026-1-25</div>
<div class="td" style="left:353px;width:98px;top:655px;height:51px;line-height:51px">7</div>
<div class="td" style="left:453px;width:222px;top:655px;height:51px;line-height:51px">SCJH000074</div>
<div class="td" style="left:677px;width:208px;top:655px;height:51px;line-height:51px">XSDD000065</div>
<div class="td" style="left:887px;width:166px;top:655px;height:51px;line-height:51px">2026-1-29</div>
<div class="td link" style="left:1055px;width:230px;top:655px;height:51px;line-height:51px">MBOM000149</div>
<div class="td st-ok" style="left:1287px;width:144px;top:655px;height:51px;line-height:51px">审核</div>
<div class="td" style="left:1433px;width:166px;top:655px;height:51px;line-height:51px">BOM运算</div>
<div class="td" style="left:1601px;width:546px;top:655px;height:51px;line-height:51px">118S ZY型纸杯机 ZY型</div>
<div class="td" style="left:2149px;width:208px;top:655px;height:51px;line-height:51px">0101000001</div>
<div class="td" style="left:2359px;width:124px;top:655px;height:51px;line-height:51px">台</div>
<div class="td" style="left:2485px;width:124px;top:655px;height:51px;line-height:51px">委外</div>
<div class="td num" style="left:2611px;width:166px;top:655px;height:51px;line-height:51px">1.00</div>
<div class="td" style="left:2779px;width:166px;top:655px;height:51px;line-height:51px">2026-1-24</div>
<div class="td" style="left:353px;width:98px;top:708px;height:51px;line-height:51px">8</div>
<div class="td" style="left:453px;width:222px;top:708px;height:51px;line-height:51px">SCJH000073</div>
<div class="td" style="left:677px;width:208px;top:708px;height:51px;line-height:51px">XSDD000062</div>
<div class="td" style="left:887px;width:166px;top:708px;height:51px;line-height:51px">2026-1-31</div>
<div class="td link" style="left:1055px;width:230px;top:708px;height:51px;line-height:51px">MBOM000148</div>
<div class="td st-ok" style="left:1287px;width:144px;top:708px;height:51px;line-height:51px">审核</div>
<div class="td" style="left:1433px;width:166px;top:708px;height:51px;line-height:51px">生产补料</div>
<div class="td" style="left:1601px;width:546px;top:708px;height:51px;line-height:51px">家庭机器人 150</div>
<div class="td" style="left:2149px;width:208px;top:708px;height:51px;line-height:51px">0105000003</div>
<div class="td" style="left:2359px;width:124px;top:708px;height:51px;line-height:51px">吨</div>
<div class="td" style="left:2485px;width:124px;top:708px;height:51px;line-height:51px">采购</div>
<div class="td num" style="left:2611px;width:166px;top:708px;height:51px;line-height:51px">100.00</div>
<div class="td" style="left:2779px;width:166px;top:708px;height:51px;line-height:51px">2026-1-21</div>
<div class="td" style="left:353px;width:98px;top:761px;height:51px;line-height:51px">9</div>
<div class="td" style="left:453px;width:222px;top:761px;height:51px;line-height:51px">SCJH000073</div>
<div class="td" style="left:677px;width:208px;top:761px;height:51px;line-height:51px">XSDD000062</div>
<div class="td" style="left:887px;width:166px;top:761px;height:51px;line-height:51px">2026-1-31</div>
<div class="td link" style="left:1055px;width:230px;top:761px;height:51px;line-height:51px">MBOM000147</div>
<div class="td st-ok" style="left:1287px;width:144px;top:761px;height:51px;line-height:51px">审核</div>
<div class="td" style="left:1433px;width:166px;top:761px;height:51px;line-height:51px">生产补料</div>
<div class="td" style="left:1601px;width:546px;top:761px;height:51px;line-height:51px">家庭机器人 150</div>
<div class="td" style="left:2149px;width:208px;top:761px;height:51px;line-height:51px">0105000003</div>
<div class="td" style="left:2359px;width:124px;top:761px;height:51px;line-height:51px">吨</div>
<div class="td" style="left:2485px;width:124px;top:761px;height:51px;line-height:51px">采购</div>
<div class="td num" style="left:2611px;width:166px;top:761px;height:51px;line-height:51px">100.00</div>
<div class="td" style="left:2779px;width:166px;top:761px;height:51px;line-height:51px">2026-1-21</div>
<div class="td" style="left:353px;width:98px;top:814px;height:50px;line-height:50px">10</div>
<div class="td" style="left:453px;width:222px;top:814px;height:50px;line-height:50px">SCJH000073</div>
<div class="td" style="left:677px;width:208px;top:814px;height:50px;line-height:50px">XSDD000062</div>
<div class="td" style="left:887px;width:166px;top:814px;height:50px;line-height:50px">2026-1-31</div>
<div class="td link" style="left:1055px;width:230px;top:814px;height:50px;line-height:50px">MBOM000146</div>
<div class="td st-ok" style="left:1287px;width:144px;top:814px;height:50px;line-height:50px">审核</div>
<div class="td" style="left:1433px;width:166px;top:814px;height:50px;line-height:50px">生产补料</div>
<div class="td" style="left:1601px;width:546px;top:814px;height:50px;line-height:50px">家庭机器人 150</div>
<div class="td" style="left:2149px;width:208px;top:814px;height:50px;line-height:50px">0105000003</div>
<div class="td" style="left:2359px;width:124px;top:814px;height:50px;line-height:50px">吨</div>
<div class="td" style="left:2485px;width:124px;top:814px;height:50px;line-height:50px">采购</div>
<div class="td num" style="left:2611px;width:166px;top:814px;height:50px;line-height:50px">100.00</div>
<div class="td" style="left:2779px;width:166px;top:814px;height:50px;line-height:50px">2026-1-21</div>
<div class="td" style="left:353px;width:98px;top:866px;height:51px;line-height:51px">11</div>
<div class="td" style="left:453px;width:222px;top:866px;height:51px;line-height:51px">SCJH000073</div>
<div class="td" style="left:677px;width:208px;top:866px;height:51px;line-height:51px">XSDD000062</div>
<div class="td" style="left:887px;width:166px;top:866px;height:51px;line-height:51px">2026-1-31</div>
<div class="td link" style="left:1055px;width:230px;top:866px;height:51px;line-height:51px">MBOM000145</div>
<div class="td st-back" style="left:1287px;width:144px;top:866px;height:51px;line-height:51px">退回</div>
<div class="td" style="left:1433px;width:166px;top:866px;height:51px;line-height:51px">BOM运算</div>
<div class="td" style="left:1601px;width:546px;top:866px;height:51px;line-height:51px">家庭机器人 150</div>
<div class="td" style="left:2149px;width:208px;top:866px;height:51px;line-height:51px">0105000003</div>
<div class="td" style="left:2359px;width:124px;top:866px;height:51px;line-height:51px">吨</div>
<div class="td" style="left:2485px;width:124px;top:866px;height:51px;line-height:51px">采购</div>
<div class="td num" style="left:2611px;width:166px;top:866px;height:51px;line-height:51px">100.00</div>
<div class="td" style="left:2779px;width:166px;top:866px;height:51px;line-height:51px">2026-1-21</div>
<div class="td" style="left:353px;width:98px;top:919px;height:51px;line-height:51px">12</div>
<div class="td" style="left:453px;width:222px;top:919px;height:51px;line-height:51px">SCJH000072</div>
<div class="td" style="left:677px;width:208px;top:919px;height:51px;line-height:51px">XSDD000061</div>
<div class="td" style="left:887px;width:166px;top:919px;height:51px;line-height:51px">2026-1-24</div>
<div class="td link" style="left:1055px;width:230px;top:919px;height:51px;line-height:51px">MBOM000142</div>
<div class="td st-ok" style="left:1287px;width:144px;top:919px;height:51px;line-height:51px">审核</div>
<div class="td" style="left:1433px;width:166px;top:919px;height:51px;line-height:51px">BOM运算</div>
<div class="td green" style="left:1601px;width:546px;top:919px;height:51px;line-height:51px">简易机柜 1800</div>
<div class="td" style="left:2149px;width:208px;top:919px;height:51px;line-height:51px">0102000001</div>
<div class="td" style="left:2359px;width:124px;top:919px;height:51px;line-height:51px">台</div>
<div class="td" style="left:2485px;width:124px;top:919px;height:51px;line-height:51px">生产</div>
<div class="td num" style="left:2611px;width:166px;top:919px;height:51px;line-height:51px">111.00</div>
<div class="td" style="left:2779px;width:166px;top:919px;height:51px;line-height:51px">2026-1-21</div>
<div class="td" style="left:353px;width:98px;top:972px;height:50px;line-height:50px">13</div>
<div class="td" style="left:453px;width:222px;top:972px;height:50px;line-height:50px">SCJH000072</div>
<div class="td" style="left:677px;width:208px;top:972px;height:50px;line-height:50px">XSDD000061</div>
<div class="td" style="left:887px;width:166px;top:972px;height:50px;line-height:50px">2026-1-24</div>
<div class="td link" style="left:1055px;width:230px;top:972px;height:50px;line-height:50px">MBOM000143</div>
<div class="td st-ok" style="left:1287px;width:144px;top:972px;height:50px;line-height:50px">审核</div>
<div class="td" style="left:1433px;width:166px;top:972px;height:50px;line-height:50px">BOM运算</div>
<div class="td green" style="left:1601px;width:546px;top:972px;height:50px;line-height:50px">传动皮轮件 735×794 主机孔540×605</div>
<div class="td" style="left:2149px;width:208px;top:972px;height:50px;line-height:50px">0301000001</div>
<div class="td" style="left:2359px;width:124px;top:972px;height:50px;line-height:50px">只</div>
<div class="td" style="left:2485px;width:124px;top:972px;height:50px;line-height:50px">加工</div>
<div class="td num" style="left:2611px;width:166px;top:972px;height:50px;line-height:50px">222.00</div>
<div class="td" style="left:2779px;width:166px;top:972px;height:50px;line-height:50px">2026-1-21</div>
<div class="td" style="left:353px;width:98px;top:1024px;height:51px;line-height:51px">14</div>
<div class="td" style="left:453px;width:222px;top:1024px;height:51px;line-height:51px">SCJH000071</div>
<div class="td" style="left:677px;width:208px;top:1024px;height:51px;line-height:51px">XSDD000056</div>
<div class="td" style="left:887px;width:166px;top:1024px;height:51px;line-height:51px">2026-1-22</div>
<div class="td link" style="left:1055px;width:230px;top:1024px;height:51px;line-height:51px">MBOM000141</div>
<div class="td st-ok" style="left:1287px;width:144px;top:1024px;height:51px;line-height:51px">审核</div>
<div class="td" style="left:1433px;width:166px;top:1024px;height:51px;line-height:51px">BOM运算</div>
<div class="td green" style="left:1601px;width:546px;top:1024px;height:51px;line-height:51px">118S ZY型纸杯机 ZY型</div>
<div class="td" style="left:2149px;width:208px;top:1024px;height:51px;line-height:51px">0101000001</div>
<div class="td" style="left:2359px;width:124px;top:1024px;height:51px;line-height:51px">台</div>
<div class="td" style="left:2485px;width:124px;top:1024px;height:51px;line-height:51px">生产</div>
<div class="td num" style="left:2611px;width:166px;top:1024px;height:51px;line-height:51px">222.00</div>
<div class="td" style="left:2779px;width:166px;top:1024px;height:51px;line-height:51px">2026-1-21</div>
<div class="td" style="left:353px;width:98px;top:1077px;height:51px;line-height:51px">15</div>
<div class="td" style="left:453px;width:222px;top:1077px;height:51px;line-height:51px">SCJH000070</div>
<div class="td" style="left:677px;width:208px;top:1077px;height:51px;line-height:51px">XSDD000057</div>
<div class="td" style="left:887px;width:166px;top:1077px;height:51px;line-height:51px">2026-1-21</div>
<div class="td link" style="left:1055px;width:230px;top:1077px;height:51px;line-height:51px">MBOM000139</div>
<div class="td st-ok" style="left:1287px;width:144px;top:1077px;height:51px;line-height:51px">审核</div>
<div class="td" style="left:1433px;width:166px;top:1077px;height:51px;line-height:51px">BOM运算</div>
<div class="td green" style="left:1601px;width:546px;top:1077px;height:51px;line-height:51px">台式电脑 8+25</div>
<div class="td" style="left:2149px;width:208px;top:1077px;height:51px;line-height:51px">0100000001</div>
<div class="td" style="left:2359px;width:124px;top:1077px;height:51px;line-height:51px">台</div>
<div class="td" style="left:2485px;width:124px;top:1077px;height:51px;line-height:51px">生产</div>
<div class="td num" style="left:2611px;width:166px;top:1077px;height:51px;line-height:51px">6.00</div>
<div class="td" style="left:2779px;width:166px;top:1077px;height:51px;line-height:51px">2026-1-20</div>
<div class="td" style="left:353px;width:98px;top:1130px;height:51px;line-height:51px">16</div>
<div class="td" style="left:453px;width:222px;top:1130px;height:51px;line-height:51px">SCJH000070</div>
<div class="td" style="left:677px;width:208px;top:1130px;height:51px;line-height:51px">XSDD000057</div>
<div class="td" style="left:887px;width:166px;top:1130px;height:51px;line-height:51px">2026-1-21</div>
<div class="td link" style="left:1055px;width:230px;top:1130px;height:51px;line-height:51px">MBOM000140</div>
<div class="td st-ok" style="left:1287px;width:144px;top:1130px;height:51px;line-height:51px">审核</div>
<div class="td" style="left:1433px;width:166px;top:1130px;height:51px;line-height:51px">BOM运算</div>
<div class="td" style="left:1601px;width:546px;top:1130px;height:51px;line-height:51px">118S ZY型纸杯机 ZY型</div>
<div class="td" style="left:2149px;width:208px;top:1130px;height:51px;line-height:51px">0101000001</div>
<div class="td" style="left:2359px;width:124px;top:1130px;height:51px;line-height:51px">台</div>
<div class="td" style="left:2485px;width:124px;top:1130px;height:51px;line-height:51px">生产</div>
<div class="td num" style="left:2611px;width:166px;top:1130px;height:51px;line-height:51px">6.00</div>
<div class="td" style="left:2779px;width:166px;top:1130px;height:51px;line-height:51px">2026-1-20</div>
<div class="td" style="left:353px;width:98px;top:1183px;height:50px;line-height:50px">17</div>
<div class="td" style="left:453px;width:222px;top:1183px;height:50px;line-height:50px">SCJH000069</div>
<div class="td" style="left:677px;width:208px;top:1183px;height:50px;line-height:50px">XSDD000060</div>
<div class="td" style="left:887px;width:166px;top:1183px;height:50px;line-height:50px">2026-1-24</div>
<div class="td link" style="left:1055px;width:230px;top:1183px;height:50px;line-height:50px">MBOM000138</div>
<div class="td st-open" style="left:1287px;width:144px;top:1183px;height:50px;line-height:50px">开立</div>
<div class="td" style="left:1433px;width:166px;top:1183px;height:50px;line-height:50px">生产补料</div>
<div class="td" style="left:1601px;width:546px;top:1183px;height:50px;line-height:50px">传动皮轮件 735×794 主机孔540×605</div>
<div class="td" style="left:2149px;width:208px;top:1183px;height:50px;line-height:50px">0301000001</div>
<div class="td" style="left:2359px;width:124px;top:1183px;height:50px;line-height:50px">只</div>
<div class="td" style="left:2485px;width:124px;top:1183px;height:50px;line-height:50px">委外</div>
<div class="td num" style="left:2611px;width:166px;top:1183px;height:50px;line-height:50px">242.00</div>
<div class="td" style="left:2779px;width:166px;top:1183px;height:50px;line-height:50px">2026-1-20</div>
<div class="td" style="left:353px;width:98px;top:1235px;height:51px;line-height:51px">18</div>
<div class="td" style="left:453px;width:222px;top:1235px;height:51px;line-height:51px">SCJH000069</div>
<div class="td" style="left:677px;width:208px;top:1235px;height:51px;line-height:51px">XSDD000060</div>
<div class="td" style="left:887px;width:166px;top:1235px;height:51px;line-height:51px">2026-1-24</div>
<div class="td link" style="left:1055px;width:230px;top:1235px;height:51px;line-height:51px">MBOM000136</div>
<div class="td st-ok" style="left:1287px;width:144px;top:1235px;height:51px;line-height:51px">审核</div>
<div class="td" style="left:1433px;width:166px;top:1235px;height:51px;line-height:51px">BOM运算</div>
<div class="td green" style="left:1601px;width:546px;top:1235px;height:51px;line-height:51px">简易机柜 1800</div>
<div class="td" style="left:2149px;width:208px;top:1235px;height:51px;line-height:51px">0102000001</div>
<div class="td" style="left:2359px;width:124px;top:1235px;height:51px;line-height:51px">台</div>
<div class="td" style="left:2485px;width:124px;top:1235px;height:51px;line-height:51px">生产</div>
<div class="td num" style="left:2611px;width:166px;top:1235px;height:51px;line-height:51px">121.00</div>
<div class="td" style="left:2779px;width:166px;top:1235px;height:51px;line-height:51px">2026-1-20</div>
<div class="td" style="left:353px;width:98px;top:1288px;height:51px;line-height:51px">19</div>
<div class="td" style="left:453px;width:222px;top:1288px;height:51px;line-height:51px">SCJH000069</div>
<div class="td" style="left:677px;width:208px;top:1288px;height:51px;line-height:51px">XSDD000060</div>
<div class="td" style="left:887px;width:166px;top:1288px;height:51px;line-height:51px">2026-1-24</div>
<div class="td link" style="left:1055px;width:230px;top:1288px;height:51px;line-height:51px">MBOM000137</div>
<div class="td st-ok" style="left:1287px;width:144px;top:1288px;height:51px;line-height:51px">审核</div>
<div class="td" style="left:1433px;width:166px;top:1288px;height:51px;line-height:51px">BOM运算</div>
<div class="td green" style="left:1601px;width:546px;top:1288px;height:51px;line-height:51px">传动皮轮件 735×794 主机孔540×605</div>
<div class="td" style="left:2149px;width:208px;top:1288px;height:51px;line-height:51px">0301000001</div>
<div class="td" style="left:2359px;width:124px;top:1288px;height:51px;line-height:51px">只</div>
<div class="td" style="left:2485px;width:124px;top:1288px;height:51px;line-height:51px">委外</div>
<div class="td num" style="left:2611px;width:166px;top:1288px;height:51px;line-height:51px">242.00</div>
<div class="td" style="left:2779px;width:166px;top:1288px;height:51px;line-height:51px">2026-1-20</div>
<div class="td" style="left:353px;width:98px;top:1341px;height:51px;line-height:51px">20</div>
<div class="td" style="left:453px;width:222px;top:1341px;height:51px;line-height:51px">SCJH000068</div>
<div class="td" style="left:677px;width:208px;top:1341px;height:51px;line-height:51px">XSDD000069</div>
<div class="td" style="left:887px;width:166px;top:1341px;height:51px;line-height:51px">2026-1-31</div>
<div class="td link" style="left:1055px;width:230px;top:1341px;height:51px;line-height:51px">MBOM000155</div>
<div class="td st-ok" style="left:1287px;width:144px;top:1341px;height:51px;line-height:51px">审核</div>
<div class="td" style="left:1433px;width:166px;top:1341px;height:51px;line-height:51px">BOM运算</div>
<div class="td" style="left:1601px;width:546px;top:1341px;height:51px;line-height:51px">简易机柜 1800</div>
<div class="td" style="left:2149px;width:208px;top:1341px;height:51px;line-height:51px">0102000001</div>
<div class="td" style="left:2359px;width:124px;top:1341px;height:51px;line-height:51px">台</div>
<div class="td" style="left:2485px;width:124px;top:1341px;height:51px;line-height:51px">采购</div>
<div class="td num" style="left:2611px;width:166px;top:1341px;height:51px;line-height:51px">100.00</div>
<div class="td" style="left:2779px;width:166px;top:1341px;height:51px;line-height:51px">2026-1-26</div>
<div class="td" style="left:353px;width:98px;top:1394px;height:50px;line-height:50px">21</div>
<div class="td" style="left:453px;width:222px;top:1394px;height:50px;line-height:50px">SCJH000067</div>
<div class="td" style="left:677px;width:208px;top:1394px;height:50px;line-height:50px">XSDD000058</div>
<div class="td" style="left:887px;width:166px;top:1394px;height:50px;line-height:50px">2026-1-21</div>
<div class="td link" style="left:1055px;width:230px;top:1394px;height:50px;line-height:50px">MBOM000154</div>
<div class="td st-ok" style="left:1287px;width:144px;top:1394px;height:50px;line-height:50px">审核</div>
<div class="td" style="left:1433px;width:166px;top:1394px;height:50px;line-height:50px">BOM补料</div>
<div class="td" style="left:1601px;width:546px;top:1394px;height:50px;line-height:50px">传动皮轮件 735×794 主机孔540×605</div>
<div class="td" style="left:2149px;width:208px;top:1394px;height:50px;line-height:50px">0301000001</div>
<div class="td" style="left:2359px;width:124px;top:1394px;height:50px;line-height:50px">只</div>
<div class="td" style="left:2485px;width:124px;top:1394px;height:50px;line-height:50px">加工</div>
<div class="td num" style="left:2611px;width:166px;top:1394px;height:50px;line-height:50px">316.00</div>
<div class="td" style="left:2779px;width:166px;top:1394px;height:50px;line-height:50px">2026-1-26</div>
<div class="td" style="left:353px;width:98px;top:1446px;height:51px;line-height:51px">22</div>
<div class="td" style="left:453px;width:222px;top:1446px;height:51px;line-height:51px">SCJH000067</div>
<div class="td" style="left:677px;width:208px;top:1446px;height:51px;line-height:51px">XSDD000058</div>
<div class="td" style="left:887px;width:166px;top:1446px;height:51px;line-height:51px">2026-1-21</div>
<div class="td link" style="left:1055px;width:230px;top:1446px;height:51px;line-height:51px">MBOM000134</div>
<div class="td st-ok" style="left:1287px;width:144px;top:1446px;height:51px;line-height:51px">审核</div>
<div class="td" style="left:1433px;width:166px;top:1446px;height:51px;line-height:51px">BOM运算</div>
<div class="td" style="left:1601px;width:546px;top:1446px;height:51px;line-height:51px">简易机柜 1800</div>
<div class="td" style="left:2149px;width:208px;top:1446px;height:51px;line-height:51px">0102000001</div>
<div class="td" style="left:2359px;width:124px;top:1446px;height:51px;line-height:51px">台</div>
<div class="td" style="left:2485px;width:124px;top:1446px;height:51px;line-height:51px">生产</div>
<div class="td num" style="left:2611px;width:166px;top:1446px;height:51px;line-height:51px">158.00</div>
<div class="td" style="left:2779px;width:166px;top:1446px;height:51px;line-height:51px">2026-1-19</div>
<div class="td" style="left:353px;width:98px;top:1499px;height:51px;line-height:51px">23</div>
<div class="td" style="left:453px;width:222px;top:1499px;height:51px;line-height:51px">SCJH000067</div>
<div class="td" style="left:677px;width:208px;top:1499px;height:51px;line-height:51px">XSDD000058</div>
<div class="td" style="left:887px;width:166px;top:1499px;height:51px;line-height:51px">2026-1-21</div>
<div class="td link" style="left:1055px;width:230px;top:1499px;height:51px;line-height:51px">MBOM000135</div>
<div class="td st-ok" style="left:1287px;width:144px;top:1499px;height:51px;line-height:51px">审核</div>
<div class="td" style="left:1433px;width:166px;top:1499px;height:51px;line-height:51px">BOM运算</div>
<div class="td green" style="left:1601px;width:546px;top:1499px;height:51px;line-height:51px">传动皮轮件 735×794 主机孔540×605</div>
<div class="td" style="left:2149px;width:208px;top:1499px;height:51px;line-height:51px">0301000001</div>
<div class="td" style="left:2359px;width:124px;top:1499px;height:51px;line-height:51px">只</div>
<div class="td" style="left:2485px;width:124px;top:1499px;height:51px;line-height:51px">加工</div>
<div class="td num" style="left:2611px;width:166px;top:1499px;height:51px;line-height:51px">316.00</div>
<div class="td" style="left:2779px;width:166px;top:1499px;height:51px;line-height:51px">2026-1-19</div>
<!-- scrollbar thumb -->
<div class="abs" style="left:2954px;top:346px;width:16px;height:274px;border-radius:8px;background:#c1c1c1"></div>

<!-- footer -->
<div class="abs" style="left:351px;top:1587px;line-height:40px;font-size:21.9px;color:#606266;white-space:nowrap">生产数量</div><div class="abs" style="left:441.5px;top:1587px;line-height:40px;font-size:21.9px;color:#606266">:</div><div class="abs" style="left:461.5px;top:1587px;line-height:40px;font-size:21.9px;color:#606266;white-space:nowrap">314,617</div>
<div class="abs" style="left:2182.5px;top:1596px;line-height:40px;font-size:22px;color:#606266;white-space:nowrap">共 116 条</div>
<div class="abs" style="left:2300px;top:1592px;width:165px;height:48px;border:2px solid #dcdfe6;border-radius:6px;background:#fff">
 <span class="abs" style="left:24px;top:0px;line-height:43px;font-size:21.9px;color:#606266;white-space:nowrap">100条/页</span>
 <svg class="abs" style="left:133px;top:19px" width="14" height="9" viewBox="0 0 14 9"><path d="M1 1l6 6 6-6" fill="none" stroke="#c0c4cc" stroke-width="1.4"/></svg>
</div>
<div class="pg" style="left:2501px;width:50px"><svg class="abs" style="left:20px;top:15px" width="10" height="17" viewBox="0 0 10 17"><path d="M8.5 1.5L2 8.5l6.5 7" fill="none" stroke="#c0c4cc" stroke-width="1.8"/></svg></div>
<div class="pg" style="left:2570px;background:#1890ff;color:#fff;font-size:21.9px;font-weight:bold;text-align:center;line-height:47px">1</div>
<div class="pg" style="left:2640px;color:#606266;font-size:21.9px;font-weight:bold;text-align:center;line-height:47px">2</div>
<div class="pg" style="left:2710px"><svg class="abs" style="left:21px;top:15px" width="10" height="17" viewBox="0 0 10 17"><path d="M1.5 1.5L8 8.5l-6.5 7" fill="none" stroke="#4a4d52" stroke-width="1.6"/></svg></div>
<div class="abs" style="left:2811px;top:1596px;line-height:40px;font-size:21.9px;color:#606266;white-space:nowrap">前往</div>
<div class="abs" style="left:2862.5px;top:1592px;width:75px;height:48px;border:2px solid #dcdfe6;border-radius:6px;background:#fff;text-align:center;line-height:43px;font-size:21.9px;color:#606266">1</div>
<div class="abs" style="left:2945px;top:1596px;line-height:40px;font-size:21.9px;color:#606266;white-space:nowrap">页</div>
<div class="abs" style="z-index:5;left:326px;top:1570px;width:2658px;height:80px;background:linear-gradient(to bottom,rgba(0,0,0,0) 0,rgba(0,0,0,0) 15%,rgba(0,0,0,.012) 40%,rgba(0,0,0,.04) 70%,rgba(0,0,0,.08) 100%)"></div>
</body></html>
